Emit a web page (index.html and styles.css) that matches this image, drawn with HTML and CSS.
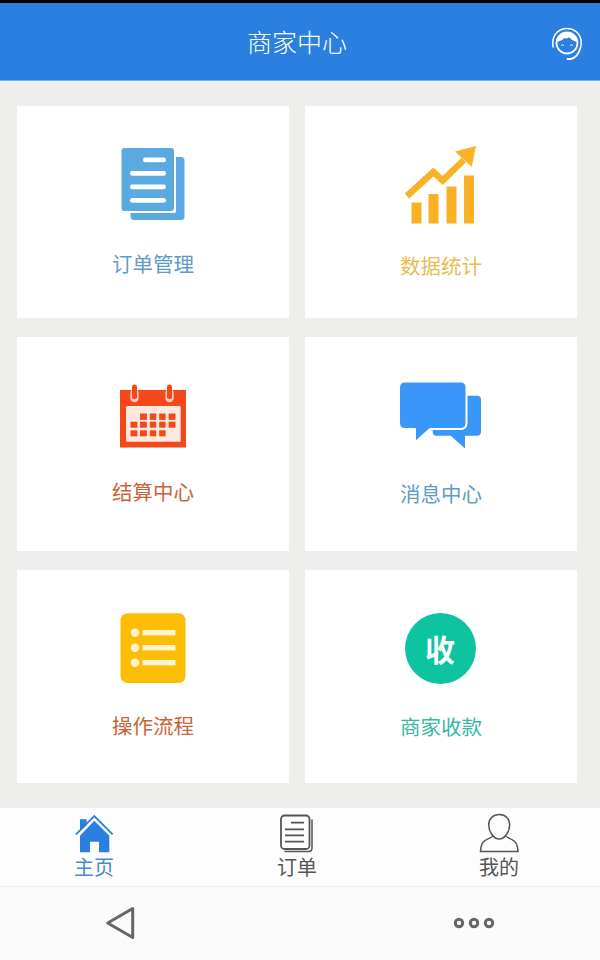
FILE: index.html
```html
<!DOCTYPE html>
<html lang="zh-CN">
<head>
<meta charset="utf-8">
<title>商家中心</title>
<link rel="stylesheet" href="styles.css">
</head>
<body>
<div class="app">
  <div class="statusbar"></div>
  <header class="header">
    <h1 class="title">商家中心</h1>
    <svg class="service" viewBox="550 26 34 38" width="34" height="38" fill="none" stroke="#fff">
      <circle cx="567" cy="43" r="10.500" stroke-width="1.800"/>
      <path fill="#fff" stroke="none" d="M557 42c.5-6 4.500-10 10-10s9.500 4 10 10c-3-.8-6-2.500-8-5-1 1.500-3 1.800-4.500 1-2 2-4.500 3.200-7.500 4z"/>
      <path d="M553.500 47.500c-.5-1-.7-3-.7-4.500 0-8.500 6-14.500 14.200-14.500s14.200 6 14.200 14.500c0 1.500-.2 3-.7 4.500" stroke-width="1.500"/>
      <path d="M580.500 47.500c-1.500 6-5 10.500-10 11.500h-3" stroke-width="1.800" stroke-linecap="round"/>
      <path d="M561 45.500q1.500-1.500 3 0M570 45.500q1.500-1.500 3 0" stroke-width=".9"/>
    </svg>
  </header>
  <main class="grid">
    <a class="card row-a">
      <svg class="icon" viewBox="108 146 90 80">
        <path fill="#5aa9e0" d="M176 157h5q3.500 0 3.500 3.500v56q0 3.500-3.500 3.500h-47q-3.500 0-3.500-3.500v-3.500h44q1.500 0 1.500-1.500z"/>
        <rect x="121.500" y="148" width="52.500" height="63" rx="3" fill="#5aa9e0"/>
        <g fill="#fff">
          <rect x="143" y="157.500" width="23" height="4.800" rx="2.400"/>
          <rect x="130" y="171" width="36" height="4.800" rx="2.400"/>
          <rect x="130" y="184.500" width="36" height="4.800" rx="2.400"/>
          <rect x="130" y="198" width="36" height="4.800" rx="2.400"/>
        </g>
      </svg>
      <span class="label label-a blue">订单管理</span>
    </a>
    <a class="card row-a">
      <svg class="icon" viewBox="396 146 90 80">
        <g fill="#fbb125">
          <rect x="411.500" y="202.500" width="10" height="21"/>
          <rect x="428.500" y="194" width="10" height="29.500"/>
          <rect x="446.500" y="186.500" width="10" height="37"/>
          <rect x="464" y="175.500" width="10" height="48"/>
          <path d="M476 146l-21 5.500 16.700 15.200z"/>
        </g>
        <path d="M407 196l26.300-24 9.400 8.500 21-20.500" fill="none" stroke="#fbb125" stroke-width="6.500"/>
      </svg>
      <span class="label label-b gold">数据统计</span>
    </a>
    <a class="card row-b">
      <svg class="icon" viewBox="108 376 90 80">
        <rect x="120" y="390" width="66" height="57.500" fill="#f2481a"/>
        <rect x="126" y="406" width="54.700" height="35.700" rx="1.500" fill="#fde9df"/>
        <g fill="#f2481a">
          <rect x="140" y="413.500" width="6.900" height="6.400"/><rect x="149.800" y="413.500" width="6.400" height="6.400"/><rect x="159.200" y="413.500" width="6.400" height="6.400"/><rect x="168.600" y="413.500" width="6.900" height="6.400"/>
          <rect x="130.500" y="421.700" width="6.900" height="6"/><rect x="140" y="421.700" width="6.900" height="6"/><rect x="149.800" y="421.700" width="6.400" height="6"/><rect x="159.200" y="421.700" width="6.400" height="6"/><rect x="168.600" y="421.700" width="6.900" height="6"/>
          <rect x="130.500" y="430.300" width="6.900" height="6"/><rect x="140" y="430.300" width="6.900" height="6"/><rect x="149.800" y="430.300" width="6.400" height="6"/><rect x="159.200" y="430.300" width="6.400" height="6"/>
        </g>
        <g fill="none" stroke-linecap="round">
          <path d="M134.500 393v5M169.500 393v5" stroke="#fbc6b2" stroke-width="8.500"/>
          <path d="M134.500 387v9.500M169.500 387v9.500" stroke="#f2481a" stroke-width="5"/>
        </g>
      </svg>
      <span class="label label-c rust">结算中心</span>
    </a>
    <a class="card row-b">
      <svg class="icon" viewBox="396 376 90 80">
        <path fill="#3a97fa" d="M440 395.700h37q4 0 4 4v32q0 4-4 4h-12v12.700l-14.300-12.700h-14q-4 0-4-4v-32q0-4 4-4z"/>
        <path fill="#3a97fa" stroke="#fff" stroke-width="2" stroke-linejoin="round" d="M405 381.500h55.500q6 0 6 6v35.500q0 6-6 6h-30.500l-15 13.500v-13.500h-10q-6 0-6-6v-35.500q0-6 6-6z"/>
      </svg>
      <span class="label label-d blue">消息中心</span>
    </a>
    <a class="card row-c">
      <svg class="icon" viewBox="108 608 90 80">
        <rect x="120.500" y="613.300" width="65" height="69.700" rx="7" fill="#fdbd05"/>
        <g fill="#fff3cf">
          <circle cx="135" cy="632.700" r="4.200"/><circle cx="135" cy="647.700" r="4.200"/><circle cx="135" cy="662.700" r="4.200"/>
          <rect x="142.500" y="630" width="33" height="5.400"/><rect x="142.500" y="645" width="33" height="5.400"/><rect x="142.500" y="660" width="33" height="5.400"/>
        </g>
      </svg>
      <span class="label label-d rust">操作流程</span>
    </a>
    <a class="card row-c">
      <span class="icon badge-wrap"><span class="badge">收</span></span>
      <span class="label label-e teal">商家收款</span>
    </a>
  </main>
  <nav class="tabs">
    <a class="tab tab-active">
      <svg class="tab-icon" viewBox="74 813 40 40">
        <path fill="#2a7fe0" d="M80 819.300h6.700v6l-6.700 6z"/>
        <path fill="none" stroke="#2a7fe0" stroke-width="1.800" d="M76 834.300l18.300-18.300 18.300 18.300"/>
        <path fill="#2a7fe0" d="M94.300 820.700l15 15v16.600h-10.300v-10.600h-9v10.600h-10v-16.600z"/>
      </svg>
      <span class="tab-label">主页</span>
    </a>
    <a class="tab">
      <svg class="tab-icon" viewBox="277 813 40 40" fill="none" stroke="#555">
        <rect x="281" y="815.500" width="28.500" height="33.500" rx="3.500" stroke-width="1.800"/>
        <path d="M312 819.500v28.500q0 3.500-3.500 3.500h-24" stroke-width="1.500"/>
        <path d="M291 822.700h13M285 829.300h19M285 835.300h19M285 841.700h19" stroke-width="1.800"/>
      </svg>
      <span class="tab-label">订单</span>
    </a>
    <a class="tab">
      <svg class="tab-icon" viewBox="479 813 40 40" fill="none" stroke="#555" stroke-width="1.500">
        <path d="M499.200 814.500c6.500 0 10.500 4.500 10.500 10.500 0 6.500-5 14-10.500 14s-10.500-7.500-10.500-14c0-6 4-10.500 10.500-10.500z"/>
        <path d="M493 836c-1 2-9 3-11 8-1 2-1.500 5-1.500 7.500h37.500c0-2.500-.5-5.500-1.500-7.500-2-5-10-6-11-8"/>
      </svg>
      <span class="tab-label">我的</span>
    </a>
  </nav>
  <footer class="sysnav">
    <svg class="sys-back" viewBox="104 905 32 36"><path d="M132.700 908.500v29l-25-14.500z" fill="none" stroke="#666" stroke-width="3" stroke-linejoin="round"/></svg>
    <svg class="sys-more" viewBox="452 915 44 16" fill="none" stroke="#666" stroke-width="3"><circle cx="459" cy="923" r="3.700"/><circle cx="474" cy="923" r="3.700"/><circle cx="489" cy="923" r="3.700"/></svg>
  </footer>
</div>
</body>
</html>
```
FILE: styles.css
```css
* { box-sizing: border-box; }
html, body { margin: 0; padding: 0; }
body { font-family: "Noto Sans CJK SC", "Noto Sans", sans-serif; background: #eeeeec; }
.app { width: 600px; height: 960px; display: flex; flex-direction: column; overflow: hidden; }
.statusbar { height: 3px; background: #000; }
.header { position: relative; height: 78px; background: #2a7fe0; border-bottom: 1px solid #6fb0ec; display: flex; align-items: center; justify-content: center; padding-right: 6px; }
.title { margin: 0; font-size: 25px; font-weight: 300; color: #fff; line-height: 1; }
.service { position: absolute; right: 16px; top: 23px; }
.grid { display: grid; grid-template-columns: 272px 272px; grid-template-rows: 212px 214px 213px; gap: 19px 16px; padding: 25px 23px 25px 17px; }
.card { background: #fff; display: flex; flex-direction: column; align-items: center; }
.row-a { padding-top: 40px; }
.row-b { padding-top: 39px; }
.row-c { padding-top: 38px; }
.icon { display: block; width: 90px; height: 80px; flex: none; }
.label { font-size: 20.5px; line-height: 28px; }
.label-a { margin-top: 23px; }
.label-b { margin-top: 25px; }
.label-c { margin-top: 21px; }
.label-d { margin-top: 23px; }
.label-e { margin-top: 24px; }
.blue { color: #5c9cc6; }
.gold { color: #e6bd52; }
.rust { color: #c8643a; }
.teal { color: #38b6a6; }
.badge-wrap { display: flex; align-items: center; justify-content: center; padding-right: 2px; }
.badge { width: 71px; height: 71px; border-radius: 50%; background: #0dc3a0; color: #fff; font-size: 30px; font-weight: 700; display: flex; align-items: center; justify-content: center; }
.tabs { height: 79px; background: #fdfdfd; border-bottom: 1px solid #eeeeee; display: grid; grid-template-columns: 188px 218px 186px; }
.tab { display: flex; flex-direction: column; align-items: center; padding-top: 5px; }
.tab-icon { display: block; width: 40px; height: 40px; flex: none; }
.tab-label { font-size: 20px; line-height: 28px; color: #555; margin-top: 0; }
.tab-active .tab-label { color: #4a8ac8; }
.sysnav { flex: 1; background: #fbfbfb; display: flex; align-items: center; justify-content: space-between; padding: 0 104px 2px 104px; }
.sys-back { display: block; width: 32px; height: 36px; }
.sys-more { display: block; width: 44px; height: 16px; }
```
